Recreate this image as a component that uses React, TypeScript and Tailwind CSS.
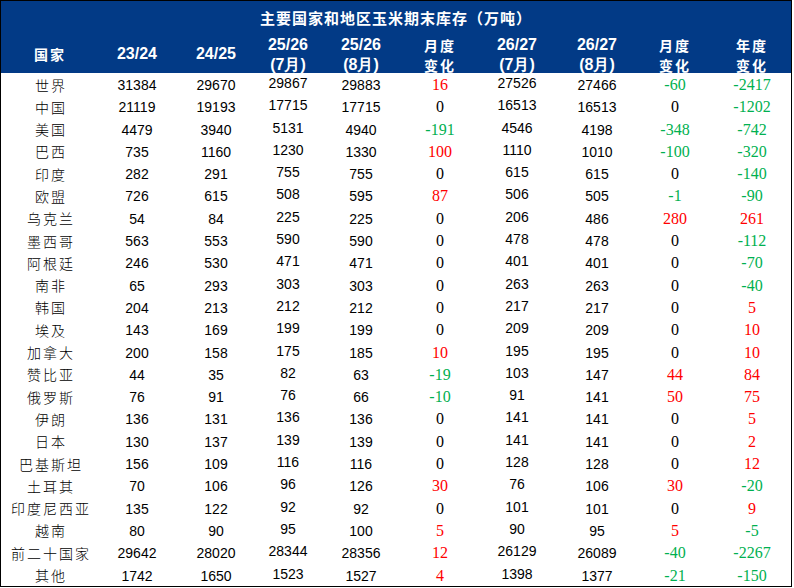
import React from "react";

type Row = [string, number, number, number, number, number, number, number, number, number];

const rows: Row[] = [
  ["世界", 31384, 29670, 29867, 29883, 16, 27526, 27466, -60, -2417],
  ["中国", 21119, 19193, 17715, 17715, 0, 16513, 16513, 0, -1202],
  ["美国", 4479, 3940, 5131, 4940, -191, 4546, 4198, -348, -742],
  ["巴西", 735, 1160, 1230, 1330, 100, 1110, 1010, -100, -320],
  ["印度", 282, 291, 755, 755, 0, 615, 615, 0, -140],
  ["欧盟", 726, 615, 508, 595, 87, 506, 505, -1, -90],
  ["乌克兰", 54, 84, 225, 225, 0, 206, 486, 280, 261],
  ["墨西哥", 563, 553, 590, 590, 0, 478, 478, 0, -112],
  ["阿根廷", 246, 530, 471, 471, 0, 401, 401, 0, -70],
  ["南非", 65, 293, 303, 303, 0, 263, 263, 0, -40],
  ["韩国", 204, 213, 212, 212, 0, 217, 217, 0, 5],
  ["埃及", 143, 169, 199, 199, 0, 209, 209, 0, 10],
  ["加拿大", 200, 158, 175, 185, 10, 195, 195, 0, 10],
  ["赞比亚", 44, 35, 82, 63, -19, 103, 147, 44, 84],
  ["俄罗斯", 76, 91, 76, 66, -10, 91, 141, 50, 75],
  ["伊朗", 136, 131, 136, 136, 0, 141, 141, 0, 5],
  ["日本", 130, 137, 139, 139, 0, 141, 141, 0, 2],
  ["巴基斯坦", 156, 109, 116, 116, 0, 128, 128, 0, 12],
  ["土耳其", 70, 106, 96, 126, 30, 76, 106, 30, -20],
  ["印度尼西亚", 135, 122, 92, 92, 0, 101, 101, 0, 9],
  ["越南", 80, 90, 95, 100, 5, 90, 95, 5, -5],
  ["前二十国家", 29642, 28020, 28344, 28356, 12, 26129, 26089, -40, -2267],
  ["其他", 1742, 1650, 1523, 1527, 4, 1398, 1377, -21, -150],
];

const grid =
  "grid grid-cols-[98px_76px_82px_62px_84px_74px_80px_80px_76px_78px]";

const hdrCn = "font-['Noto_Sans_CJK_SC',sans-serif] font-bold text-[14px] tracking-[2px] leading-[20px]";
const hdrNum = "font-['Liberation_Sans',Arial,sans-serif] font-bold text-[16px] leading-[20px]";

function Change({ v }: { v: number }) {
  const color = v > 0 ? "text-[#ff0000]" : v < 0 ? "text-[#00b050]" : "text-black";
  return (
    <div className={`flex items-center justify-center font-['Liberation_Serif','Times_New_Roman',serif] text-[16px] ${color}`}>
      {v}
    </div>
  );
}

function Num({ v, raised }: { v: number; raised?: boolean }) {
  return (
    <div
      className={`flex items-center justify-center font-['Liberation_Sans',Arial,sans-serif] text-[14px] text-black ${
        raised ? "pb-[3px]" : "pt-[1px]"
      }`}
    >
      {v}
    </div>
  );
}

export default function App() {
  return (
    <div className="w-[794px] h-[588px] bg-white">
      <div className="w-[792px] border border-black">
        <div className="bg-[#023a86] text-white">
          <div className="h-[32px] flex items-center justify-center pt-[2px] font-['Noto_Sans_CJK_SC',sans-serif] font-bold text-[15px] tracking-[1px]">
            主要国家和地区玉米期末库存（万吨）
          </div>
          <div className={`${grid} h-[40px]`}>
            <div className={`flex items-center justify-center ${hdrCn}`}>国家</div>
            <div className={`flex items-center justify-center ${hdrNum}`}>23/24</div>
            <div className={`flex items-center justify-center ${hdrNum}`}>24/25</div>
            <div className="flex flex-col items-center justify-center pt-[2px]">
              <span className={hdrNum}>25/26</span>
              <span className={hdrNum}>(7月)</span>
            </div>
            <div className="flex flex-col items-center justify-center pt-[2px]">
              <span className={hdrNum}>25/26</span>
              <span className={hdrNum}>(8月)</span>
            </div>
            <div className="flex flex-col items-center justify-center pt-[2px]">
              <span className={hdrCn}>月度</span>
              <span className={hdrCn}>变化</span>
            </div>
            <div className="flex flex-col items-center justify-center pt-[2px]">
              <span className={hdrNum}>26/27</span>
              <span className={hdrNum}>(7月)</span>
            </div>
            <div className="flex flex-col items-center justify-center pt-[2px]">
              <span className={hdrNum}>26/27</span>
              <span className={hdrNum}>(8月)</span>
            </div>
            <div className="flex flex-col items-center justify-center pt-[2px]">
              <span className={hdrCn}>月度</span>
              <span className={hdrCn}>变化</span>
            </div>
            <div className="flex flex-col items-center justify-center pt-[2px]">
              <span className={hdrCn}>年度</span>
              <span className={hdrCn}>变化</span>
            </div>
          </div>
        </div>
        <div>
          {rows.map((r) => (
            <div key={r[0]} className={`${grid} h-[22.3px]`}>
              <div className="flex items-center justify-center font-['Noto_Sans_CJK_SC',sans-serif] font-light text-[14px] tracking-[2px] pl-[2px] text-black">
                {r[0]}
              </div>
              <Num v={r[1]} />
              <Num v={r[2]} />
              <Num v={r[3]} raised />
              <Num v={r[4]} />
              <Change v={r[5]} />
              <Num v={r[6]} raised />
              <Num v={r[7]} />
              <Change v={r[8]} />
              <Change v={r[9]} />
            </div>
          ))}
        </div>
      </div>
    </div>
  );
}
